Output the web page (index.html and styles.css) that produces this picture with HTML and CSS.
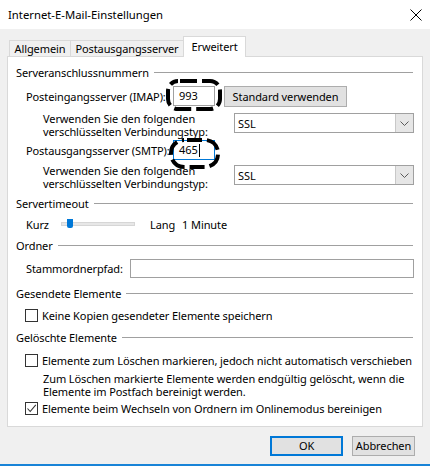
FILE: index.html
```html
<!DOCTYPE html>
<html lang="de">
<head>
<meta charset="utf-8">
<title>Internet-E-Mail-Einstellungen</title>
<link rel="stylesheet" href="styles.css">
</head>
<body>
<div class="titlebar">
  <span class="title">Internet-E-Mail-Einstellungen</span>
  <svg class="close" width="12" height="12" viewBox="0 0 12 12"><path d="M0.5 0.5L11.5 11.5M11.5 0.5L0.5 11.5" stroke="#000" stroke-width="1" fill="none"/></svg>
</div>
<div class="client">
  <div class="tabs">
    <div class="tab t1">Allgemein</div>
    <div class="tab t2">Postausgangsserver</div>
    <div class="tab t3 active">Erweitert</div>
  </div>
  <div class="panel">
    <div class="group-head g1"><span>Serveranschlussnummern</span><i></i></div>
    <div class="row port-row r-imap">
      <span class="port-lbl">Posteingangsserver (IMAP):</span>
      <div class="port-wrap">
        <div class="input port">993</div>
        <svg class="ring ring-imap" width="57" height="33" viewBox="0 0 57 33"><rect x="2" y="2" width="52" height="28" rx="10" ry="10" fill="none" stroke="#000" stroke-width="4" stroke-dasharray="17 5" stroke-dashoffset="-2"/></svg>
      </div>
      <div class="btn std">Standard verwenden</div>
    </div>
    <div class="row verw-row v1">
      <span class="verw-lbl">Verwenden Sie den folgenden<br>verschlüsselten Verbindungstyp:</span>
      <div class="select"><span>SSL</span><div class="drop"><svg width="9" height="5" viewBox="0 0 9 5"><path d="M0.5 0.5L4.5 4.5L8.5 0.5" stroke="#5a5a5a" fill="none"/></svg></div></div>
    </div>
    <div class="row port-row r-smtp">
      <span class="port-lbl">Postausgangsserver (SMTP):</span>
      <div class="port-wrap">
        <div class="input port focused">465<b class="caret"></b></div>
        <svg class="ring ring-smtp" width="52" height="32" viewBox="0 0 52 32"><rect x="2" y="2" width="47" height="27" rx="13" ry="13" fill="none" stroke="#000" stroke-width="4" stroke-dasharray="15 5" stroke-dashoffset="-3"/></svg>
      </div>
    </div>
    <div class="row verw-row v2">
      <span class="verw-lbl">Verwenden Sie den folgenden<br>verschlüsselten Verbindungstyp:</span>
      <div class="select"><span>SSL</span><div class="drop"><svg width="9" height="5" viewBox="0 0 9 5"><path d="M0.5 0.5L4.5 4.5L8.5 0.5" stroke="#5a5a5a" fill="none"/></svg></div></div>
    </div>
    <div class="group-head g2"><span>Servertimeout</span><i></i></div>
    <div class="row slider-row">
      <span class="kurz">Kurz</span>
      <div class="track"><div class="thumb"></div></div>
      <span class="lang">Lang</span>
      <span class="minute">1 Minute</span>
    </div>
    <div class="group-head g3"><span>Ordner</span><i></i></div>
    <div class="row stamm-row">
      <span class="stamm-lbl">Stammordnerpfad:</span>
      <div class="input stamm"></div>
    </div>
    <div class="group-head g4"><span>Gesendete Elemente</span><i></i></div>
    <div class="row cb-row c1">
      <span class="cb"></span><span>Keine Kopien gesendeter Elemente speichern</span>
    </div>
    <div class="group-head g5"><span>Gelöschte Elemente</span><i></i></div>
    <div class="row cb-row c2">
      <span class="cb"></span><span>Elemente zum Löschen markieren, jedoch nicht automatisch verschieben</span>
    </div>
    <div class="desc">Zum Löschen markierte Elemente werden endgültig gelöscht, wenn die<br>Elemente im Postfach bereinigt werden.</div>
    <div class="row cb-row c3">
      <span class="cb checked"><svg width="11" height="11" viewBox="0 0 11 11"><path d="M1.5 5.5L4.2 8.5L9.8 1.8" stroke="#333" stroke-width="1.1" fill="none"/></svg></span><span>Elemente beim Wechseln von Ordnern im Onlinemodus bereinigen</span>
    </div>
  </div>
  <div class="footer">
    <div class="btn ok">OK</div>
    <div class="btn cancel">Abbrechen</div>
  </div>
</div>
</body>
</html>
```

FILE: styles.css
```css
* { box-sizing: border-box; margin: 0; padding: 0; }
html, body { width: 430px; height: 466px; overflow: hidden; }
body {
  background: #f0f0f0;
  font-family: "Noto Sans", "Open Sans", sans-serif;
  font-size: 11px;
  letter-spacing: -0.1px;
  color: #000;
  white-space: nowrap;
  border-bottom: 2px solid #1883d7;
}
.titlebar {
  height: 29px;
  background: #fff;
  display: flex;
  align-items: center;
  justify-content: space-between;
  padding: 0 8px 0 8px;
  font-size: 11.3px;
  letter-spacing: 0;
}
.close { display: block; }
.client { padding: 7px 7px 0 7px; }
.tabs {
  display: flex;
  height: 21px;
  padding-left: 2px;
  position: relative;
  z-index: 1;
  margin-bottom: -1px;
  align-items: flex-start;
}
.tab {
  height: 16px;
  margin-top: 4px;
  border: 1px solid #d9d9d9;
  border-bottom: none;
  background: #f0f0f0;
  line-height: 15px;
  text-align: center;
}
.t1 { width: 62px; }
.t2 { width: 114px; margin-left: -1px; }
.t3 { width: 63px; margin-left: -1px; }
.tab.active { height: 21px; margin-top: 0; background: #fff; line-height: 19px; }
.panel {
  height: 371px;
  border: 1px solid #d9d9d9;
  background: #fff;
  padding: 8px 8px 0 8px;
}
.group-head {
  display: flex;
  align-items: center;
  height: 16px;
  line-height: 16px;
}
.group-head i {
  flex: 1;
  height: 1px;
  background: #a0a0a0;
  margin: 0 1px 0 5px;
  position: relative;
  top: -1px;
}
.row { display: flex; align-items: center; padding-left: 10px; }
.port-row { height: 20px; }
.r-imap { margin-top: 5px; }
.r-smtp { margin-top: 2px; }
.port-lbl { width: 147px; }
.port-wrap { position: relative; width: 42px; height: 20px; }
.input {
  border: 1px solid #a0a0a0;
  background: #fff;
  height: 20px;
}
.port { width: 42px; padding-left: 5px; line-height: 18px; display: flex; align-items: center; }
.port.focused { border-color: #0078d7; }
.caret { display: inline-block; width: 1px; height: 13px; background: #000; margin-left: 1px; }
.ring { position: absolute; }
.ring-imap { left: -7px; top: -7px; }
.ring-smtp { left: -4px; top: -2px; }
.btn {
  background: #e1e1e1;
  border: 1px solid #adadad;
  text-align: center;
}
.std { width: 123px; height: 21px; line-height: 19px; margin-left: 9px; align-self: flex-start; }
.verw-row { height: 26px; padding-left: 27px; align-items: flex-start; }
.v1 { margin-top: 6px; }
.v2 { margin-top: 4px; }
.verw-lbl { width: 191px; line-height: 13px; }
.select {
  width: 180px;
  height: 20px;
  margin-top: 1px;
  border: 1px solid #a0a0a0;
  background: #fff;
  display: flex;
  align-items: center;
  justify-content: space-between;
  padding-left: 3px;
}
.drop {
  width: 18px;
  height: 18px;
  background: #e6e6e6;
  border-left: 1px solid #c8c8c8;
  display: flex;
  align-items: center;
  justify-content: center;
}
.drop svg { display: block; }
.g2 { margin-top: 6px; }
.slider-row { height: 20px; margin-top: 2px; }
.kurz { width: 35px; }
.track {
  position: relative;
  width: 74px;
  height: 4px;
  background: #e7e7e7;
  border: 1px solid #d6d6d6;
}
.thumb {
  position: absolute;
  left: 5px;
  top: -4px;
  width: 6px;
  height: 9px;
  background: #0078d7;
  border-radius: 0 0 2px 2px;
}
.lang { margin-left: 15px; }
.minute { margin-left: 7px; }
.g3 { margin-top: 4px; }
.stamm-row { height: 19px; margin-top: 5px; }
.stamm-lbl { width: 104px; }
.stamm { flex: 1; height: 19px; }
.g4 { margin-top: 8px; }
.cb-row { height: 16px; padding-left: 9px; }
.c1 { margin-top: 5px; }
.g5 { margin-top: 7px; }
.c2 { margin-top: 6px; }
.cb {
  width: 13px;
  height: 13px;
  border: 1px solid #333;
  background: #fff;
  margin-right: 4px;
  display: flex;
  align-items: center;
  justify-content: center;
  flex: none;
}
.cb svg { display: block; }
.desc { padding-left: 27px; line-height: 13px; margin-top: 4px; }
.c3 { margin-top: 2px; }
.footer {
  display: flex;
  justify-content: flex-end;
  margin-top: 9px;
  padding-right: 8px;
}
.ok { width: 73px; height: 20px; line-height: 16px; border: 2px solid #0078d7; }
.cancel { width: 63px; height: 20px; line-height: 18px; margin-left: 9px; }
```
